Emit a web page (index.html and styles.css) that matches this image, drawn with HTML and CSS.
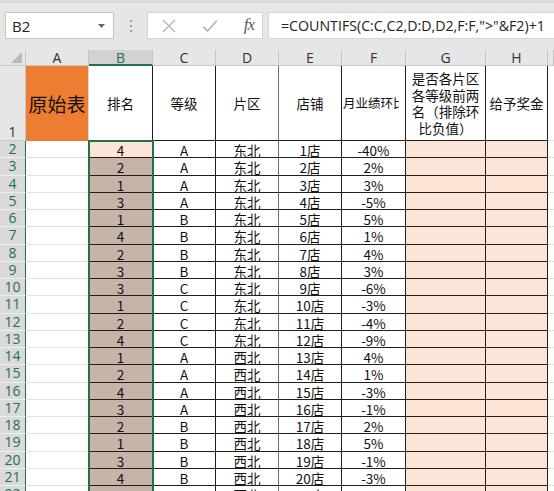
FILE: index.html
```html
<!DOCTYPE html>
<html>
<head>
<meta charset="utf-8">
<link rel="stylesheet" href="styles.css">
</head>
<body>
<div class="top">
  <div class="namebox"><span class="nb-text">B2</span><svg class="dd" width="7" height="4" viewBox="0 0 7 4"><path d="M0 0h7L3.5 4z" fill="#666"/></svg></div>
  <div class="dots"><i></i><i></i><i></i></div>
  <div class="icons">
    <svg width="14" height="14" viewBox="0 0 14 14"><path d="M1 1L13 13M13 1L1 13" stroke="#b4b4b4" stroke-width="1.4" fill="none"/></svg>
    <svg width="16" height="14" viewBox="0 0 16 14"><path d="M1 7.5L5.5 12L15 1.5" stroke="#b4b4b4" stroke-width="1.6" fill="none"/></svg>
    <span class="fx">fx</span>
  </div>
  <div class="formula">=COUNTIFS(C:C,C2,D:D,D2,F:F,"&gt;"&amp;F2)+1</div>
</div>
<div class="sheet">
  <div class="grid">
    <div class="corner"><svg width="11" height="11" viewBox="0 0 11 11"><path d="M11 0V11H0z" fill="#b9b9b9"/></svg></div>
    <div class="ch">A</div><div class="ch chs">B</div><div class="ch">C</div><div class="ch">D</div><div class="ch">E</div><div class="ch">F</div><div class="ch">G</div><div class="ch">H</div><div class="ch"></div>

    <div class="rh rh1">1</div>
    <div class="a1">原始表</div>
    <div class="c hd">排名</div>
    <div class="c hd">等级</div>
    <div class="c hd cd">片区</div>
    <div class="c hd">店铺</div>
    <div class="c hd hl"><span class="clip">月业绩环比</span></div>
    <div class="c hd wrap">是否各片区各等级前两名（排除环比负值）</div>
    <div class="c hd">给予奖金</div>
    <div class="x"></div>

    <div class="rh">2</div><div class="ca"></div><div class="c b2">4</div><div class="c">A</div><div class="c cd">东北</div><div class="c">1店</div><div class="c">-40%</div><div class="c pk"></div><div class="c pk"></div><div class="x"></div>
    <div class="rh">3</div><div class="ca"></div><div class="c b">2</div><div class="c">A</div><div class="c cd">东北</div><div class="c">2店</div><div class="c">2%</div><div class="c pk"></div><div class="c pk"></div><div class="x"></div>
    <div class="rh">4</div><div class="ca"></div><div class="c b">1</div><div class="c">A</div><div class="c cd">东北</div><div class="c">3店</div><div class="c">3%</div><div class="c pk"></div><div class="c pk"></div><div class="x"></div>
    <div class="rh">5</div><div class="ca"></div><div class="c b">3</div><div class="c">A</div><div class="c cd">东北</div><div class="c">4店</div><div class="c">-5%</div><div class="c pk"></div><div class="c pk"></div><div class="x"></div>
    <div class="rh">6</div><div class="ca"></div><div class="c b">1</div><div class="c">B</div><div class="c cd">东北</div><div class="c">5店</div><div class="c">5%</div><div class="c pk"></div><div class="c pk"></div><div class="x"></div>
    <div class="rh">7</div><div class="ca"></div><div class="c b">4</div><div class="c">B</div><div class="c cd">东北</div><div class="c">6店</div><div class="c">1%</div><div class="c pk"></div><div class="c pk"></div><div class="x"></div>
    <div class="rh">8</div><div class="ca"></div><div class="c b">2</div><div class="c">B</div><div class="c cd">东北</div><div class="c">7店</div><div class="c">4%</div><div class="c pk"></div><div class="c pk"></div><div class="x"></div>
    <div class="rh">9</div><div class="ca"></div><div class="c b">3</div><div class="c">B</div><div class="c cd">东北</div><div class="c">8店</div><div class="c">3%</div><div class="c pk"></div><div class="c pk"></div><div class="x"></div>
    <div class="rh">10</div><div class="ca"></div><div class="c b">3</div><div class="c">C</div><div class="c cd">东北</div><div class="c">9店</div><div class="c">-6%</div><div class="c pk"></div><div class="c pk"></div><div class="x"></div>
    <div class="rh">11</div><div class="ca"></div><div class="c b">1</div><div class="c">C</div><div class="c cd">东北</div><div class="c">10店</div><div class="c">-3%</div><div class="c pk"></div><div class="c pk"></div><div class="x"></div>
    <div class="rh">12</div><div class="ca"></div><div class="c b">2</div><div class="c">C</div><div class="c cd">东北</div><div class="c">11店</div><div class="c">-4%</div><div class="c pk"></div><div class="c pk"></div><div class="x"></div>
    <div class="rh">13</div><div class="ca"></div><div class="c b">4</div><div class="c">C</div><div class="c cd">东北</div><div class="c">12店</div><div class="c">-9%</div><div class="c pk"></div><div class="c pk"></div><div class="x"></div>
    <div class="rh">14</div><div class="ca"></div><div class="c b">1</div><div class="c">A</div><div class="c cd">西北</div><div class="c">13店</div><div class="c">4%</div><div class="c pk"></div><div class="c pk"></div><div class="x"></div>
    <div class="rh">15</div><div class="ca"></div><div class="c b">2</div><div class="c">A</div><div class="c cd">西北</div><div class="c">14店</div><div class="c">1%</div><div class="c pk"></div><div class="c pk"></div><div class="x"></div>
    <div class="rh">16</div><div class="ca"></div><div class="c b">4</div><div class="c">A</div><div class="c cd">西北</div><div class="c">15店</div><div class="c">-3%</div><div class="c pk"></div><div class="c pk"></div><div class="x"></div>
    <div class="rh">17</div><div class="ca"></div><div class="c b">3</div><div class="c">A</div><div class="c cd">西北</div><div class="c">16店</div><div class="c">-1%</div><div class="c pk"></div><div class="c pk"></div><div class="x"></div>
    <div class="rh">18</div><div class="ca"></div><div class="c b">2</div><div class="c">B</div><div class="c cd">西北</div><div class="c">17店</div><div class="c">2%</div><div class="c pk"></div><div class="c pk"></div><div class="x"></div>
    <div class="rh">19</div><div class="ca"></div><div class="c b">1</div><div class="c">B</div><div class="c cd">西北</div><div class="c">18店</div><div class="c">5%</div><div class="c pk"></div><div class="c pk"></div><div class="x"></div>
    <div class="rh">20</div><div class="ca"></div><div class="c b">3</div><div class="c">B</div><div class="c cd">西北</div><div class="c">19店</div><div class="c">-1%</div><div class="c pk"></div><div class="c pk"></div><div class="x"></div>
    <div class="rh">21</div><div class="ca"></div><div class="c b">4</div><div class="c">B</div><div class="c cd">西北</div><div class="c">20店</div><div class="c">-3%</div><div class="c pk"></div><div class="c pk"></div><div class="x"></div>
    <div class="rh">22</div><div class="ca"></div><div class="c b">2</div><div class="c">B</div><div class="c cd">西北</div><div class="c">21店</div><div class="c">2%</div><div class="c pk"></div><div class="c pk"></div><div class="x"></div>
  </div>
  <div class="sel"></div>
</div>
</body>
</html>
```
FILE: styles.css
```css
* { box-sizing: border-box; }
html, body { margin: 0; padding: 0; }
html { height: 491px; overflow: hidden; }
body {
  width: 554px;
  height: 491px;
  overflow: hidden;
  background: #e6e6e6;
  font-family: "Noto Sans CJK SC", sans-serif;
}
.top {
  height: 50px;
  display: flex;
  align-items: flex-start;
  border-top: 3px solid #dadada;
  padding-top: 9px;
}
.namebox {
  margin-left: 5px;
  width: 109px;
  height: 27px;
  background: #fff;
  border: 1px solid #c6c6c6;
  display: flex;
  align-items: center;
  justify-content: space-between;
  padding: 0 8px 0 6px;
  font-family: "Open Sans", sans-serif;
  font-size: 15px;
  color: #222;
}
.dots {
  width: 33px;
  height: 27px;
  display: flex;
  flex-direction: column;
  align-items: center;
  justify-content: center;
  gap: 3px;
}
.dots i {
  display: block;
  width: 2px;
  height: 2px;
  background: #9a9a9a;
}
.icons {
  width: 116px;
  height: 27px;
  background: #fff;
  border: 1px solid #d4d4d4;
  display: flex;
  align-items: center;
  justify-content: space-between;
  padding: 0 8px 0 14px;
}
.fx {
  font-family: "Liberation Serif", serif;
  font-style: italic;
  font-size: 17px;
  color: #5a5a5a;
  letter-spacing: -1px;
  padding-bottom: 2px;
}
.formula {
  margin-left: 5px;
  flex: 1;
  height: 27px;
  background: #fff;
  border: 1px solid #d4d4d4;
  border-right: none;
  padding-left: 12px;
  font-family: "Open Sans", sans-serif;
  font-size: 14.2px;
  line-height: 25px;
  color: #222;
  white-space: nowrap;
  overflow: hidden;
}
.sheet {
  position: relative;
  height: 441px;
  overflow: hidden;
}
.grid {
  display: grid;
  grid-template-columns: 26px 63px 64px 63px 63px 63px 64px 80px 62px 6px;
  grid-template-rows: 16px 75px repeat(21, 17.25px);
  background: #fff;
}
.corner {
  background: #e6e6e6;
  border-right: 1px solid #c8c8c8;
  border-bottom: 1px solid #c8c8c8;
  display: flex;
  align-items: flex-end;
  justify-content: flex-end;
  padding: 0 3px 2px 0;
}
.ch {
  background: #e6e6e6;
  border-right: 1px solid #c3c3c3;
  border-bottom: 1px solid #c8c8c8;
  font-family: "Open Sans", sans-serif;
  font-size: 14px;
  line-height: 15px;
  color: #333;
  text-align: center;
}
.chs {
  background: #d2d2d2;
  color: #217346;
  border-bottom: 2px solid #217346;
}
.rh {
  background: #dadada;
  border-bottom: 1px solid #eeeeee;
  border-right: 1px solid #217346;
  color: #217346;
  font-family: "Open Sans", sans-serif;
  font-size: 14px;
  line-height: 16px;
  text-align: center;
}
.rh1 {
  background: #e6e6e6;
  color: #333;
  border-right: 1px solid #c8c8c8;
  border-bottom: 1px solid #c8c8c8;
  display: flex;
  align-items: flex-end;
  justify-content: center;
}
.a1 {
  background: #ed7d31;
  color: #111;
  font-size: 19px;
  display: flex;
  align-items: center;
  justify-content: center;
  border-right: 1px solid #d9d9d9;
}
.ca {
  background: #fff;
  border-bottom: 1px solid #e1e1e1;
}
.c {
  border-right: 1px solid #1f1f1f;
  border-bottom: 1px solid #1f1f1f;
  padding-top: 1px;
  font-size: 13.5px;
  line-height: 16px;
  color: #111;
  text-align: center;
  white-space: nowrap;
  overflow: hidden;
}
.cd { border-right: 1px solid #6b6b6b; }
.hd {
  display: flex;
  align-items: center;
  justify-content: center;
  padding-top: 0;
}
.hl { justify-content: flex-start; padding-left: 1px; }
.clip {
  display: block;
  width: 56px;
  font-size: 12.5px;
  overflow: hidden;
  white-space: nowrap;
}
.wrap {
  white-space: normal;
  padding: 0 2px;
  line-height: 16.5px;
  text-align: center;
}
.b { background: #c7b4a9; }
.b2 { background: #fce4d6; }
.pk { background: #fce4d6; }
.x {
  background: #fff;
  border-bottom: 1px solid #e1e1e1;
}
.sel {
  position: absolute;
  left: 88px;
  top: 90px;
  width: 66px;
  height: 360px;
  border: 2px solid #217346;
  pointer-events: none;
}
```
